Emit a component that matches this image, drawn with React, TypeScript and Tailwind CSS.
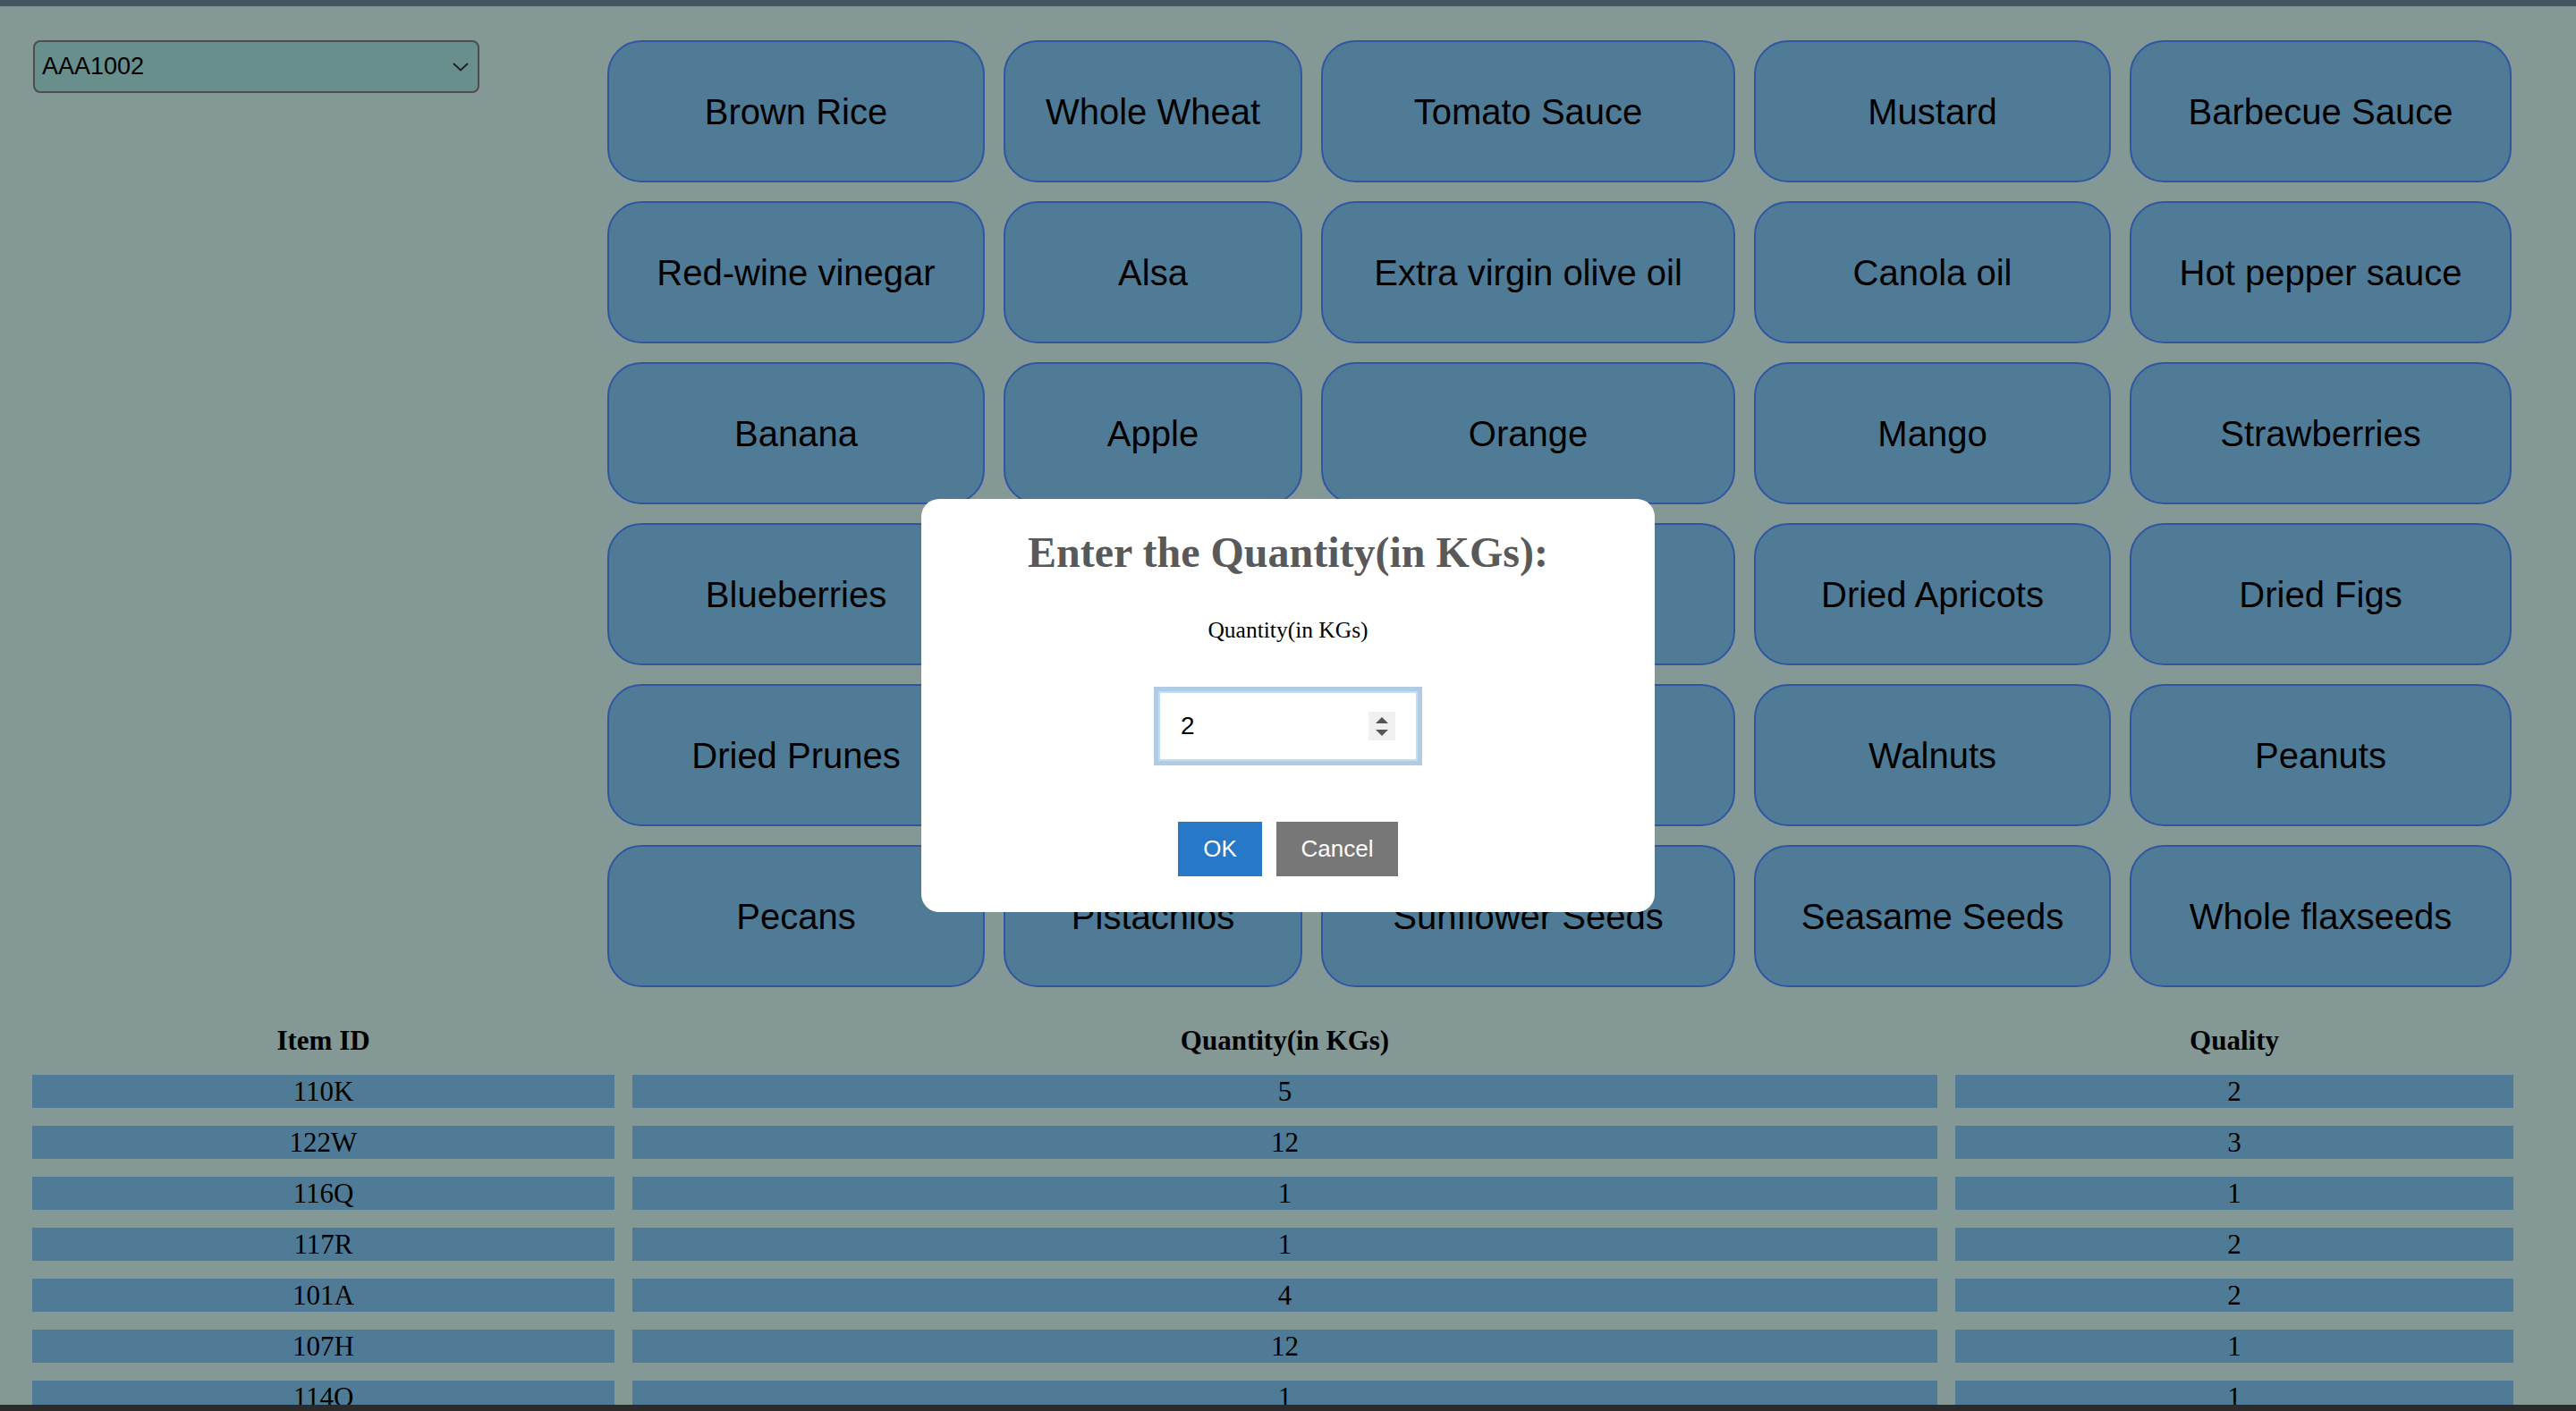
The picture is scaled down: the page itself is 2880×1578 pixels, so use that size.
import React from 'react';

const items: string[][] = [
  ['Brown Rice', 'Whole Wheat', 'Tomato Sauce', 'Mustard', 'Barbecue Sauce'],
  ['Red-wine vinegar', 'Alsa', 'Extra virgin olive oil', 'Canola oil', 'Hot pepper sauce'],
  ['Banana', 'Apple', 'Orange', 'Mango', 'Strawberries'],
  ['Blueberries', 'Raisins', 'Dates', 'Dried Apricots', 'Dried Figs'],
  ['Dried Prunes', 'Almonds', 'Cashews', 'Walnuts', 'Peanuts'],
  ['Pecans', 'Pistachios', 'Sunflower Seeds', 'Seasame Seeds', 'Whole flaxseeds'],
];

const rows = [
  { id: '110K', qty: '5', quality: '2' },
  { id: '122W', qty: '12', quality: '3' },
  { id: '116Q', qty: '1', quality: '1' },
  { id: '117R', qty: '1', quality: '2' },
  { id: '101A', qty: '4', quality: '2' },
  { id: '107H', qty: '12', quality: '1' },
  { id: '114Q', qty: '1', quality: '1' },
];

const sans = "font-['Liberation_Sans',Arial,sans-serif]";
const serif = "font-['Liberation_Serif','Times_New_Roman',serif]";

const QuantityDialog: React.FC = () => {
  return (
    <div className="fixed inset-0 flex items-center justify-center">
      <div className="w-[820px] h-[462px] bg-white rounded-[20px] flex flex-col items-center pt-[32px]">
        <h2 className={`${serif} text-[48px] leading-[55px] font-bold text-[#595959]`}>
          Enter the Quantity(in KGs):
        </h2>
        <label className={`${serif} text-[25.5px] leading-[29px] text-black mt-[45px]`}>Quantity(in KGs)</label>
        <div className="mt-[49px] w-[300px] h-[88px] border-[5px] border-[#b0cbe3]">
          <div className="w-full h-full border-2 border-[#bfe0f2] bg-white flex items-center justify-between pl-[23px] pr-[23px]">
            <span className={`${sans} text-[28px] text-black`}>2</span>
            <div className="w-[30px] h-[32px] bg-[#f0f0f0] flex flex-col items-center justify-center gap-[7px]">
              <svg width="14" height="7" viewBox="0 0 14 7">
                <path d="M7 0 L14 7 L0 7 Z" fill="#555" />
              </svg>
              <svg width="14" height="7" viewBox="0 0 14 7">
                <path d="M0 0 L14 0 L7 7 Z" fill="#555" />
              </svg>
            </div>
          </div>
        </div>
        <div className={`${sans} mt-[63px] flex gap-[16px] text-white text-[26px]`}>
          <button className="w-[94px] h-[61px] bg-[#2778c6] flex items-center justify-center">OK</button>
          <button className="w-[136px] h-[61px] bg-[#777777] flex items-center justify-center">Cancel</button>
        </div>
      </div>
    </div>
  );
};

export default function App() {
  return (
    <div className="h-screen flex flex-col overflow-hidden bg-[#849896]">
      <div className="h-[7px] shrink-0 bg-[#445460]" />

      <div className="flex-1 overflow-hidden">
        <div className="flex items-start pl-[37px] pt-[38px]">
          <div
            className={`${sans} w-[499px] h-[59px] shrink-0 bg-[#698f8c] border-2 border-[#4d4d4d] rounded-[8px] flex items-center justify-between pl-[8px] pr-[10px] text-[27px] text-black`}
          >
            <span>AAA1002</span>
            <svg width="18" height="10" viewBox="0 0 18 10" fill="none">
              <path d="M1 1 L9 8.5 L17 1" stroke="#222" strokeWidth="2" />
            </svg>
          </div>

          <div className="ml-[143px] grid grid-cols-[422px_334px_463px_399px_427px] auto-rows-[159px] gap-x-[21px] gap-y-[21px]">
            {items.flat().map((name, i) => (
              <button
                key={i}
                className={`${sans} bg-[#4f7b96] border-2 border-[#3156a0] rounded-[38px] flex items-center justify-center text-[40px] text-black`}
              >
                {name}
              </button>
            ))}
          </div>
        </div>

        <div className={`${serif} ml-[36px] mt-[41px] grid grid-cols-[651px_1459px_624px] auto-rows-[37px] gap-x-[20px] gap-y-[20px] text-[31px] leading-[37px] text-black`}>
          <div className="text-center font-bold">Item ID</div>
          <div className="text-center font-bold">Quantity(in KGs)</div>
          <div className="text-center font-bold">Quality</div>
          {rows.map((r) => (
            <React.Fragment key={r.id}>
              <div className="bg-[#4f7b96] text-center">{r.id}</div>
              <div className="bg-[#4f7b96] text-center">{r.qty}</div>
              <div className="bg-[#4f7b96] text-center">{r.quality}</div>
            </React.Fragment>
          ))}
        </div>
      </div>

      <div className="h-[7px] shrink-0 bg-[#2b2b2b]" />

      <QuantityDialog />
    </div>
  );
}
